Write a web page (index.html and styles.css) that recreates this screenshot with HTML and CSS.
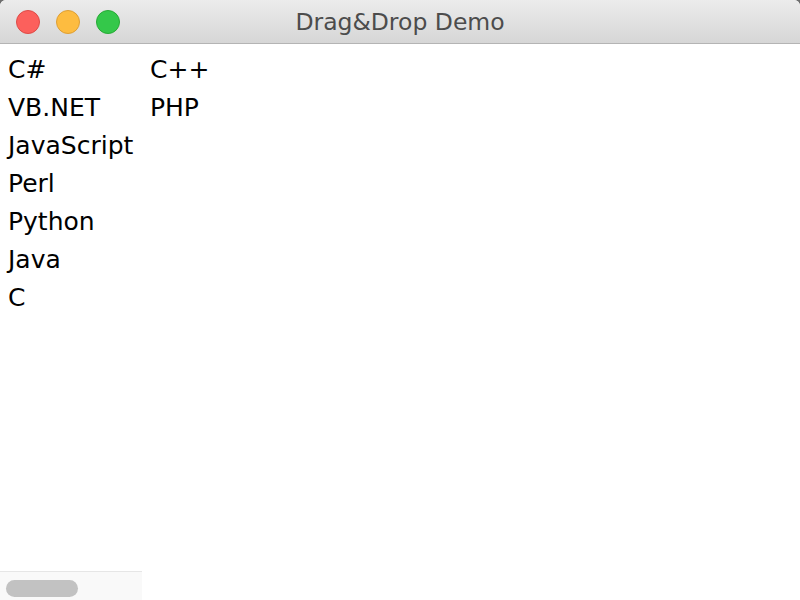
FILE: index.html
```html
<!DOCTYPE html>
<html>
<head>
<meta charset="utf-8">
<title>Drag&amp;Drop Demo</title>
<link rel="stylesheet" href="styles.css">
</head>
<body>
<div class="window">
  <div class="titlebar">
    <div class="lights">
      <span class="light red"></span>
      <span class="light yellow"></span>
      <span class="light green"></span>
    </div>
    <div class="title">Drag&amp;Drop Demo</div>
  </div>
  <div class="content">
    <div class="list">
      <div class="column">
        <div class="item">C#</div>
        <div class="item">VB.NET</div>
        <div class="item">JavaScript</div>
        <div class="item">Perl</div>
        <div class="item">Python</div>
        <div class="item">Java</div>
        <div class="item">C</div>
      </div>
      <div class="column">
        <div class="item">C++</div>
        <div class="item">PHP</div>
      </div>
    </div>
    <div class="hscroll">
      <div class="thumb"></div>
    </div>
  </div>
</div>
</body>
</html>
```

FILE: styles.css
```css
html, body {
  margin: 0;
  padding: 0;
  width: 800px;
  height: 600px;
  overflow: hidden;
  background: #6e6e6e;
}
.window {
  width: 800px;
  height: 600px;
  display: flex;
  flex-direction: column;
  background: #ffffff;
  border-radius: 6px 6px 0 0;
  overflow: hidden;
  font-family: "DejaVu Sans", "Liberation Sans", Arial, sans-serif;
}
.titlebar {
  position: relative;
  height: 43px;
  flex: none;
  background: linear-gradient(#ececec, #d6d6d6);
  border-bottom: 1px solid #b4b4b4;
  display: flex;
  align-items: center;
  justify-content: center;
}
.lights {
  position: absolute;
  left: 16px;
  top: 10px;
  display: flex;
  gap: 16px;
}
.light {
  width: 22px;
  height: 22px;
  border-radius: 50%;
  display: block;
  border: 1px solid rgba(0,0,0,0.12);
}
.red { background: #fc605c; border-color: #de4b47; }
.yellow { background: #fdbc40; border-color: #de9f34; }
.green { background: #34c84a; border-color: #27aa35; }
.title {
  font-size: 23.5px;
  color: #4c4c4c;
  padding-top: 1px;
}
.content {
  flex: 1;
  display: flex;
  flex-direction: column;
  justify-content: space-between;
}
.list {
  display: flex;
  padding-top: 7px;
}
.column {
  width: 142px;
  padding-left: 8px;
  box-sizing: border-box;
}
.item {
  font-size: 25px;
  line-height: 38px;
  height: 38px;
  color: #000;
  white-space: nowrap;
}
.hscroll {
  width: 142px;
  height: 29px;
  box-sizing: border-box;
  background: #f9f9f9;
  border-top: 1px solid #e6e6e6;
  display: flex;
  align-items: center;
  padding-left: 6px;
}
.thumb {
  width: 72px;
  height: 17px;
  border-radius: 9px;
  background: #c2c2c2;
  margin-top: 4px;
}
```
